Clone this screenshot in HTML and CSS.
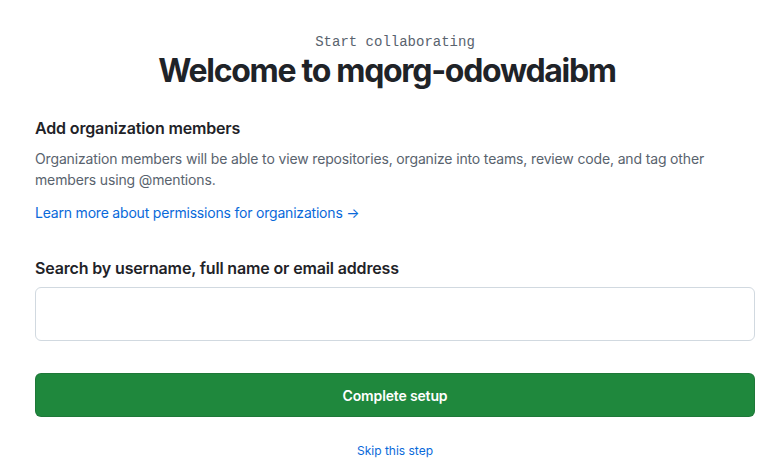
FILE: index.html
```html
<!DOCTYPE html>
<html>
<head>
<meta charset="utf-8">
<link rel="stylesheet" href="styles.css">
</head>
<body>
<main class="page">
  <header class="hero">
    <div class="eyebrow">Start collaborating</div>
    <h1 class="title">Welcome to mqorg-odowdaibm</h1>
  </header>
  <section class="members">
    <h2 class="section-title">Add organization members</h2>
    <p class="desc">Organization members will be able to view repositories, organize into teams, review code, and tag other members using @mentions.</p>
    <a class="learn" href="#">Learn more about permissions for organizations →</a>
  </section>
  <section class="search">
    <label class="search-label" for="q">Search by username, full name or email address</label>
    <input id="q" class="search-input" type="text">
  </section>
  <button class="btn-primary" type="button">Complete setup</button>
  <div class="skip"><a href="#">Skip this step</a></div>
</main>
</body>
</html>
```

FILE: styles.css
```css
html, body {
  margin: 0;
  padding: 0;
  background: #ffffff;
}
body {
  font-family: Inter, "Liberation Sans", sans-serif;
  color: #1f2328;
}
.page {
  width: 720px;
  margin-left: 35px;
  padding-top: 32px;
}
.hero {
  text-align: center;
}
.eyebrow {
  font-family: "Liberation Mono", "DejaVu Sans Mono", monospace;
  font-size: 14px;
  line-height: 21px;
  color: #59636e;
}
.title {
  margin: 0;
  padding-right: 16px;
  font-size: 32px;
  line-height: 36px;
  font-weight: 700;
  letter-spacing: -1.3px;
  color: #1f2328;
}
.members {
  margin-top: 27px;
}
.section-title {
  margin: 0;
  font-size: 16px;
  line-height: 24px;
  font-weight: 600;
  letter-spacing: -0.15px;
}
.desc {
  margin: 8px 0 0;
  font-size: 14px;
  line-height: 21px;
  letter-spacing: -0.15px;
  color: #59636e;
}
.learn {
  display: inline-block;
  margin-top: 12px;
  font-size: 14px;
  line-height: 21px;
  letter-spacing: -0.2px;
  color: #0969da;
  text-decoration: none;
}
.search {
  margin-top: 33px;
}
.search-label {
  display: block;
  font-size: 16px;
  line-height: 24px;
  font-weight: 600;
  letter-spacing: -0.15px;
}
.search-input {
  display: block;
  box-sizing: border-box;
  width: 720px;
  height: 54px;
  margin-top: 7px;
  border: 1px solid #d1d9e0;
  border-radius: 6px;
  background: #ffffff;
}
.btn-primary {
  display: block;
  box-sizing: border-box;
  width: 720px;
  height: 44px;
  margin-top: 32px;
  border: 1px solid rgba(31, 35, 40, 0.15);
  border-radius: 6px;
  background: #1f883d;
  color: #ffffff;
  font-family: Inter, "Liberation Sans", sans-serif;
  font-size: 14px;
  font-weight: 600;
  letter-spacing: -0.15px;
}
.skip {
  margin-top: 25px;
  text-align: center;
  font-size: 12px;
  line-height: 18px;
}
.skip a {
  color: #0969da;
  text-decoration: none;
}
```
